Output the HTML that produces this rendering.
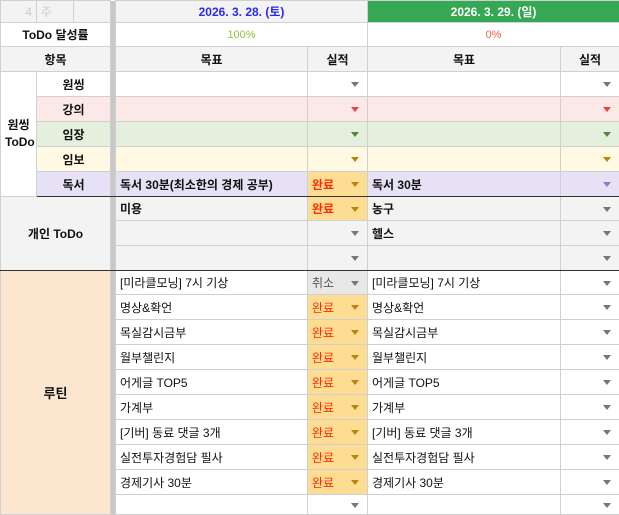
<!DOCTYPE html>
<html><head><meta charset="utf-8"><style>
*{margin:0;padding:0;box-sizing:border-box}
body{width:619px;height:515px;overflow:hidden;background:#fff;font-family:"Liberation Sans","Noto Sans CJK KR","NanumGothic",sans-serif;font-size:12px;color:#111}
table{border-collapse:collapse;table-layout:fixed;width:619px}
td{border:1px solid #d0d0d0;padding:0 4px;white-space:nowrap;overflow:hidden;position:relative;vertical-align:middle}
.g{background:#c8c8c8;border-top:none;border-bottom:none;padding:0}
.c{text-align:center}
.b{font-weight:bold}
.hd{background:#f3f3f3}
.a::after{content:"";position:absolute;right:8px;top:50%;margin-top:-2px;border-left:4px solid transparent;border-right:4px solid transparent;border-top:5px solid #777}
.ar::after{border-top-color:#e8453c}.ag::after{border-top-color:#4f8a3b}.ay::after{border-top-color:#b8860b}.ap::after{border-top-color:#8e7cc3}
.done{background:#fddc93;color:#ff2a00}
.cx{background:#e8e8e8;color:#555}
.pk{background:#fde8e8}.gr{background:#e4efdd}.yl{background:#fff8e3}.pu{background:#e6e1f4}
.pe{background:#fde6cf}
.tk td{border-bottom:1.5px solid #333}
</style></head><body>
<table>
<colgroup><col style="width:36px"><col style="width:37px"><col style="width:37px"><col style="width:5px"><col style="width:192px"><col style="width:60px"><col style="width:193px"><col style="width:59px"></colgroup>
<tr style="height:22px" class="hd">
<td class="hd" style="text-align:right;color:#ccc">4</td><td class="hd" style="color:#ccc">주</td><td class="hd"></td><td class="g"></td>
<td colspan="2" class="c hd b" style="color:#2b2bf0">2026. 3. 28. (토)</td>
<td colspan="2" class="c b" style="background:#34a853;color:#fff">2026. 3. 29. (일)</td></tr>
<tr style="height:24px"><td colspan="3" class="c b">ToDo 달성률</td><td class="g"></td>
<td colspan="2" class="c" style="color:#8bc34a;font-size:11px">100%</td><td colspan="2" class="c" style="color:#e8664a;font-size:11px">0%</td></tr>
<tr style="height:25px" class="hd"><td colspan="3" class="c b hd">항목</td><td class="g"></td><td class="c b hd">목표</td><td class="c b hd">실적</td><td class="c b hd">목표</td><td class="c b hd">실적</td></tr>
<tr style="height:25px"><td rowspan="5" class="c b" style="white-space:normal;line-height:17px">원씽<br>ToDo</td><td colspan="2" class="c b">원씽</td><td class="g"></td><td></td><td class="a"></td><td></td><td class="a"></td></tr>
<tr style="height:25px" class="pk"><td colspan="2" class="c b">강의</td><td class="g"></td><td></td><td class="a ar"></td><td></td><td class="a ar"></td></tr>
<tr style="height:25px" class="gr"><td colspan="2" class="c b">임장</td><td class="g"></td><td></td><td class="a ag"></td><td></td><td class="a ag"></td></tr>
<tr style="height:25px" class="yl"><td colspan="2" class="c b">임보</td><td class="g"></td><td></td><td class="a ay"></td><td></td><td class="a ay"></td></tr>
<tr style="height:25px" class="pu tk"><td colspan="2" class="c b">독서</td><td class="g"></td><td class="b">독서 30분(최소한의 경제 공부)</td><td class="a ay done b">완료</td><td class="b">독서 30분</td><td class="a ap"></td></tr>
<tr style="height:24px" class="hd"><td rowspan="3" colspan="3" class="c b hd" style="border-bottom:1.5px solid #333">개인 ToDo</td><td class="g"></td><td class="b">미용</td><td class="a ay done b">완료</td><td class="b">농구</td><td class="a"></td></tr>
<tr style="height:25px" class="hd"><td class="g"></td><td></td><td class="a"></td><td class="b">헬스</td><td class="a"></td></tr>
<tr style="height:25px" class="hd tk"><td class="g"></td><td></td><td class="a"></td><td></td><td class="a"></td></tr>
<tr style="height:24px"><td rowspan="10" colspan="3" class="c b pe" style="font-size:13px">루틴</td><td class="g"></td><td>[미라클모닝] 7시 기상</td><td class="a cx">취소</td><td>[미라클모닝] 7시 기상</td><td class="a"></td></tr>
<tr style="height:25px"><td class="g"></td><td>명상&amp;확언</td><td class="a ay done">완료</td><td>명상&amp;확언</td><td class="a"></td></tr>
<tr style="height:25px"><td class="g"></td><td>목실감시금부</td><td class="a ay done">완료</td><td>목실감시금부</td><td class="a"></td></tr>
<tr style="height:25px"><td class="g"></td><td>월부챌린지</td><td class="a ay done">완료</td><td>월부챌린지</td><td class="a"></td></tr>
<tr style="height:25px"><td class="g"></td><td>어게글 TOP5</td><td class="a ay done">완료</td><td>어게글 TOP5</td><td class="a"></td></tr>
<tr style="height:25px"><td class="g"></td><td>가계부</td><td class="a ay done">완료</td><td>가계부</td><td class="a"></td></tr>
<tr style="height:25px"><td class="g"></td><td>[기버] 동료 댓글 3개</td><td class="a ay done">완료</td><td>[기버] 동료 댓글 3개</td><td class="a"></td></tr>
<tr style="height:25px"><td class="g"></td><td>실전투자경험담 필사</td><td class="a ay done">완료</td><td>실전투자경험담 필사</td><td class="a"></td></tr>
<tr style="height:25px"><td class="g"></td><td>경제기사 30분</td><td class="a ay done">완료</td><td>경제기사 30분</td><td class="a"></td></tr>
<tr style="height:20px"><td class="g"></td><td></td><td class="a"></td><td></td><td class="a"></td></tr>
</table>
</body></html>
